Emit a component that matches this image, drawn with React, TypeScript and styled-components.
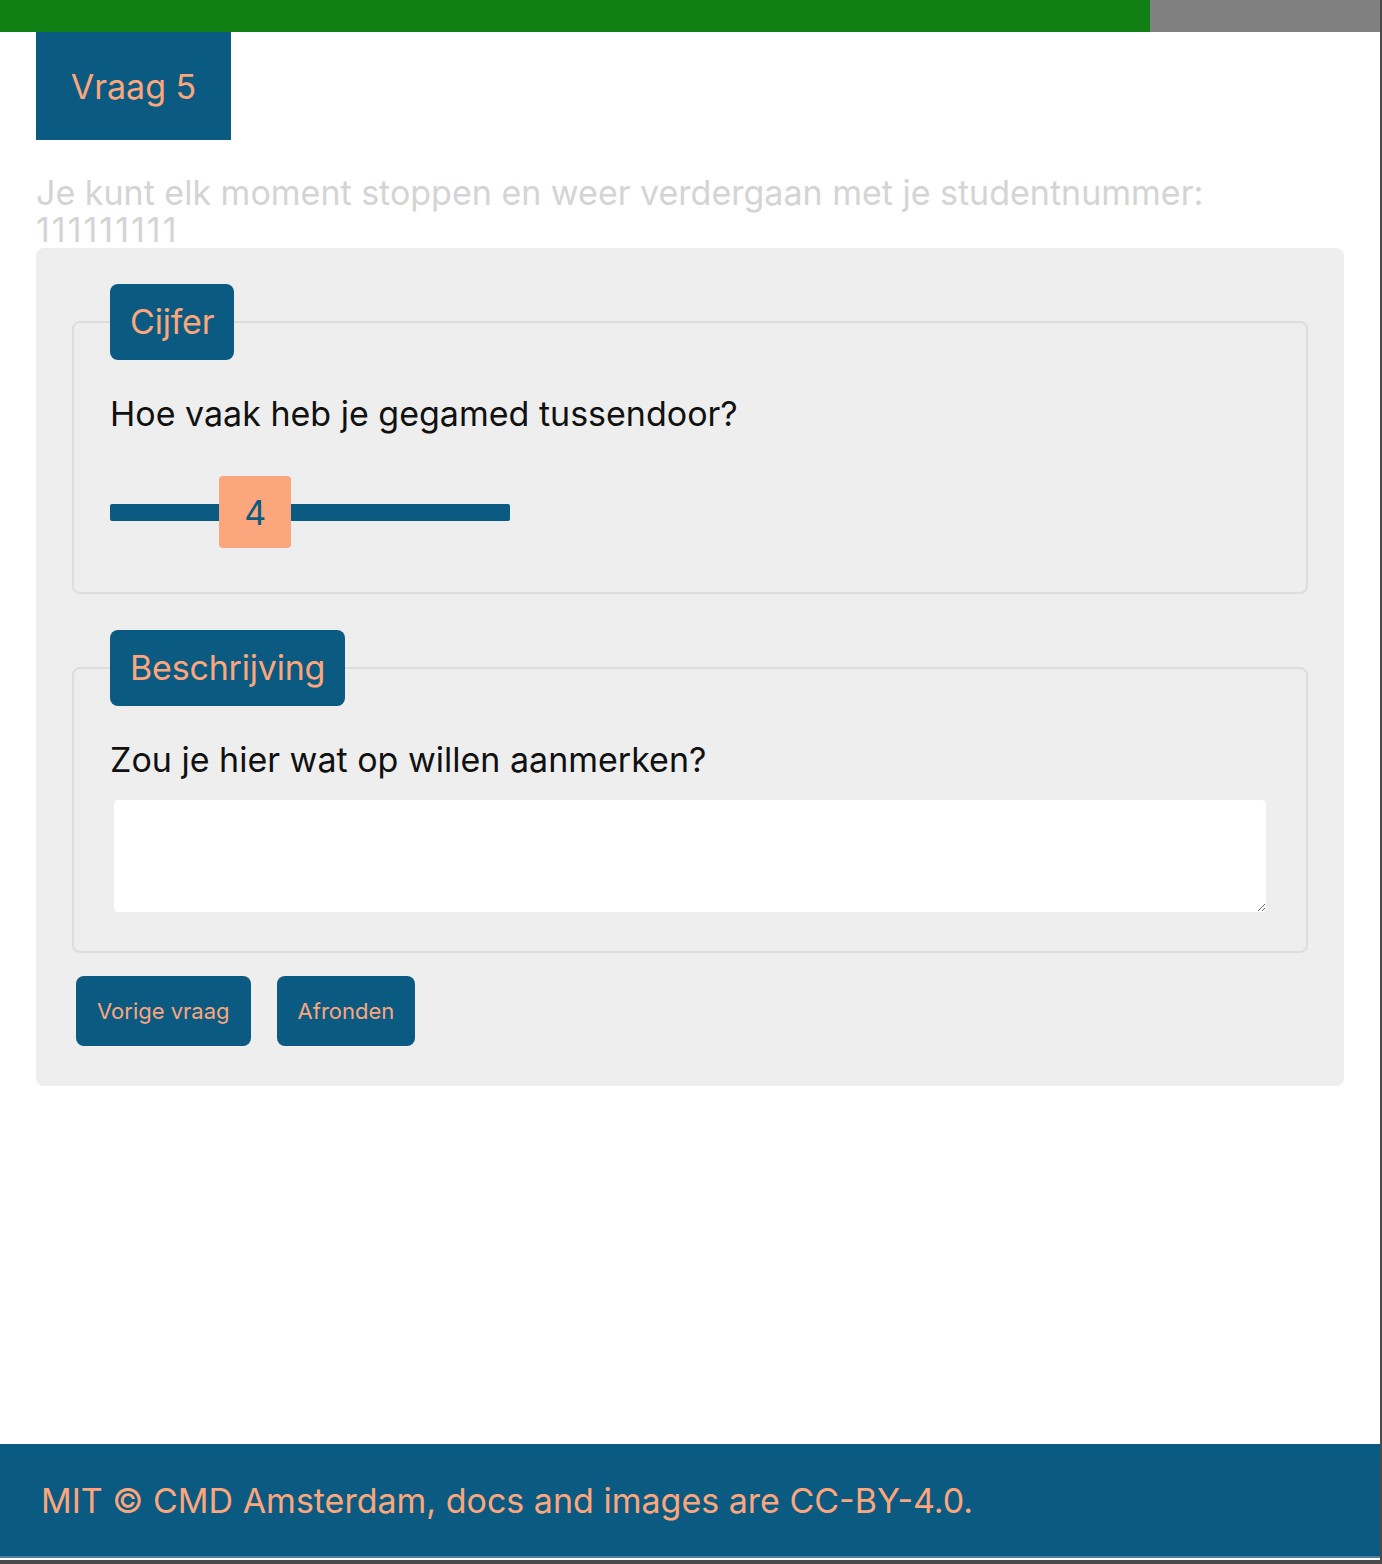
import React, { useState } from "react";
import styled, { createGlobalStyle } from "styled-components";

const BLUE = "#0b5a82";
const ORANGE = "#fba67c";

const GlobalStyle = createGlobalStyle`
  html, body { margin: 0; padding: 0; background: #4a4a4a; }
  body { font-family: Inter, "Noto Sans", "Liberation Sans", sans-serif; }
  * { box-sizing: border-box; }
`;

const Page = styled.div`
  width: 1380px;
  min-height: 1560px;
  background: #ffffff;
  display: flex;
  flex-direction: column;
`;

const Progress = styled.div`
  height: 32px;
  background: #808080;
  display: flex;
`;

const ProgressFill = styled.div`
  height: 100%;
  background: #107f13;
`;

const Main = styled.main`
  padding: 0 36px;
  display: flex;
  flex-direction: column;
  align-items: flex-start;
`;

const Title = styled.h1`
  margin: 0;
  width: 195px;
  height: 108px;
  background: ${BLUE};
  color: ${ORANGE};
  font-weight: 400;
  font-size: 34px;
  display: flex;
  align-items: center;
  justify-content: center;
`;

const Intro = styled.p`
  margin: 35px 0 0;
  color: #d4d4d4;
  font-size: 34px;
  line-height: 36.5px;
  max-width: 1200px;
`;

const Digits = styled.span`
  letter-spacing: 2px;
`;

const Panel = styled.form`
  align-self: stretch;
  background: #eeeeee;
  border-radius: 8px;
  padding: 36px 36px 40px;
  display: flex;
  flex-direction: column;
  gap: 36px;
`;

const Fieldset = styled.fieldset<{ $bottom: number }>`
  margin: 0;
  border: 2px solid #dddddd;
  border-radius: 8px;
  padding: 0 36px ${(p) => p.$bottom}px;
  min-width: 0;
`;

const Legend = styled.legend`
  background: ${BLUE};
  color: ${ORANGE};
  font-size: 34px;
  line-height: 76px;
  height: 76px;
  padding: 0 20px;
  border-radius: 8px;
  letter-spacing: -0.2px;
`;

const Question = styled.p`
  margin: 28px 0 0;
  color: #111111;
  font-size: 34px;
  line-height: 52px;
`;

const SliderWrap = styled.div`
  position: relative;
  width: 400px;
  height: 72px;
  margin: 36px 0 1px;
`;

const Track = styled.div`
  position: absolute;
  left: 0;
  right: 0;
  top: 28px;
  height: 17px;
  background: ${BLUE};
  border-radius: 2px;
`;

const Thumb = styled.div`
  position: absolute;
  top: 0;
  width: 72px;
  height: 72px;
  background: ${ORANGE};
  color: ${BLUE};
  border-radius: 4px;
  font-size: 34px;
  display: flex;
  align-items: center;
  justify-content: center;
`;

const TextArea = styled.textarea`
  display: block;
  margin: 14px 0 0 4px;
  width: 1152px;
  height: 112px;
  border: none;
  border-radius: 4px;
  background: #ffffff;
  resize: vertical;
  font-family: inherit;
  font-size: 20px;
`;

const Actions = styled.div`
  display: flex;
  gap: 26px;
  padding-left: 4px;
  margin-top: -13px;
`;

const Button = styled.button`
  height: 70px;
  padding: 0 21px;
  background: ${BLUE};
  color: ${ORANGE};
  border: none;
  border-radius: 8px;
  font-family: inherit;
  font-size: 22px;
  cursor: pointer;
`;

const Footer = styled.footer`
  margin-top: auto;
  margin-bottom: 2px;
  height: 114px;
  background: ${BLUE};
  color: ${ORANGE};
  font-size: 34px;
  display: flex;
  align-items: center;
  padding-left: 41px;
  border-bottom: 2px solid #4b7f9c;
`;

export default function App() {
  const [value] = useState(4);
  const min = 1;
  const max = 10;
  const frac = (value - min) / (max - min);
  return (
    <>
      <GlobalStyle />
      <Page>
        <Progress>
          <ProgressFill style={{ width: `${(5 / 6) * 100}%` }} />
        </Progress>
        <Main>
          <Title>Vraag 5</Title>
          <Intro>
            Je kunt elk moment stoppen en weer verdergaan met je studentnummer: <Digits>111111111</Digits>
          </Intro>
          <Panel onSubmit={(e) => e.preventDefault()}>
            <Fieldset $bottom={43}>
              <Legend>Cijfer</Legend>
              <Question>Hoe vaak heb je gegamed tussendoor?</Question>
              <SliderWrap>
                <Track />
                <Thumb style={{ left: `${frac * (400 - 72)}px` }}>{value}</Thumb>
              </SliderWrap>
            </Fieldset>
            <Fieldset $bottom={39}>
              <Legend>Beschrijving</Legend>
              <Question>Zou je hier wat op willen aanmerken?</Question>
              <TextArea />
            </Fieldset>
            <Actions>
              <Button type="button">Vorige vraag</Button>
              <Button type="submit">Afronden</Button>
            </Actions>
          </Panel>
        </Main>
        <Footer>MIT © CMD Amsterdam, docs and images are CC-BY-4.0.</Footer>
      </Page>
    </>
  );
}
